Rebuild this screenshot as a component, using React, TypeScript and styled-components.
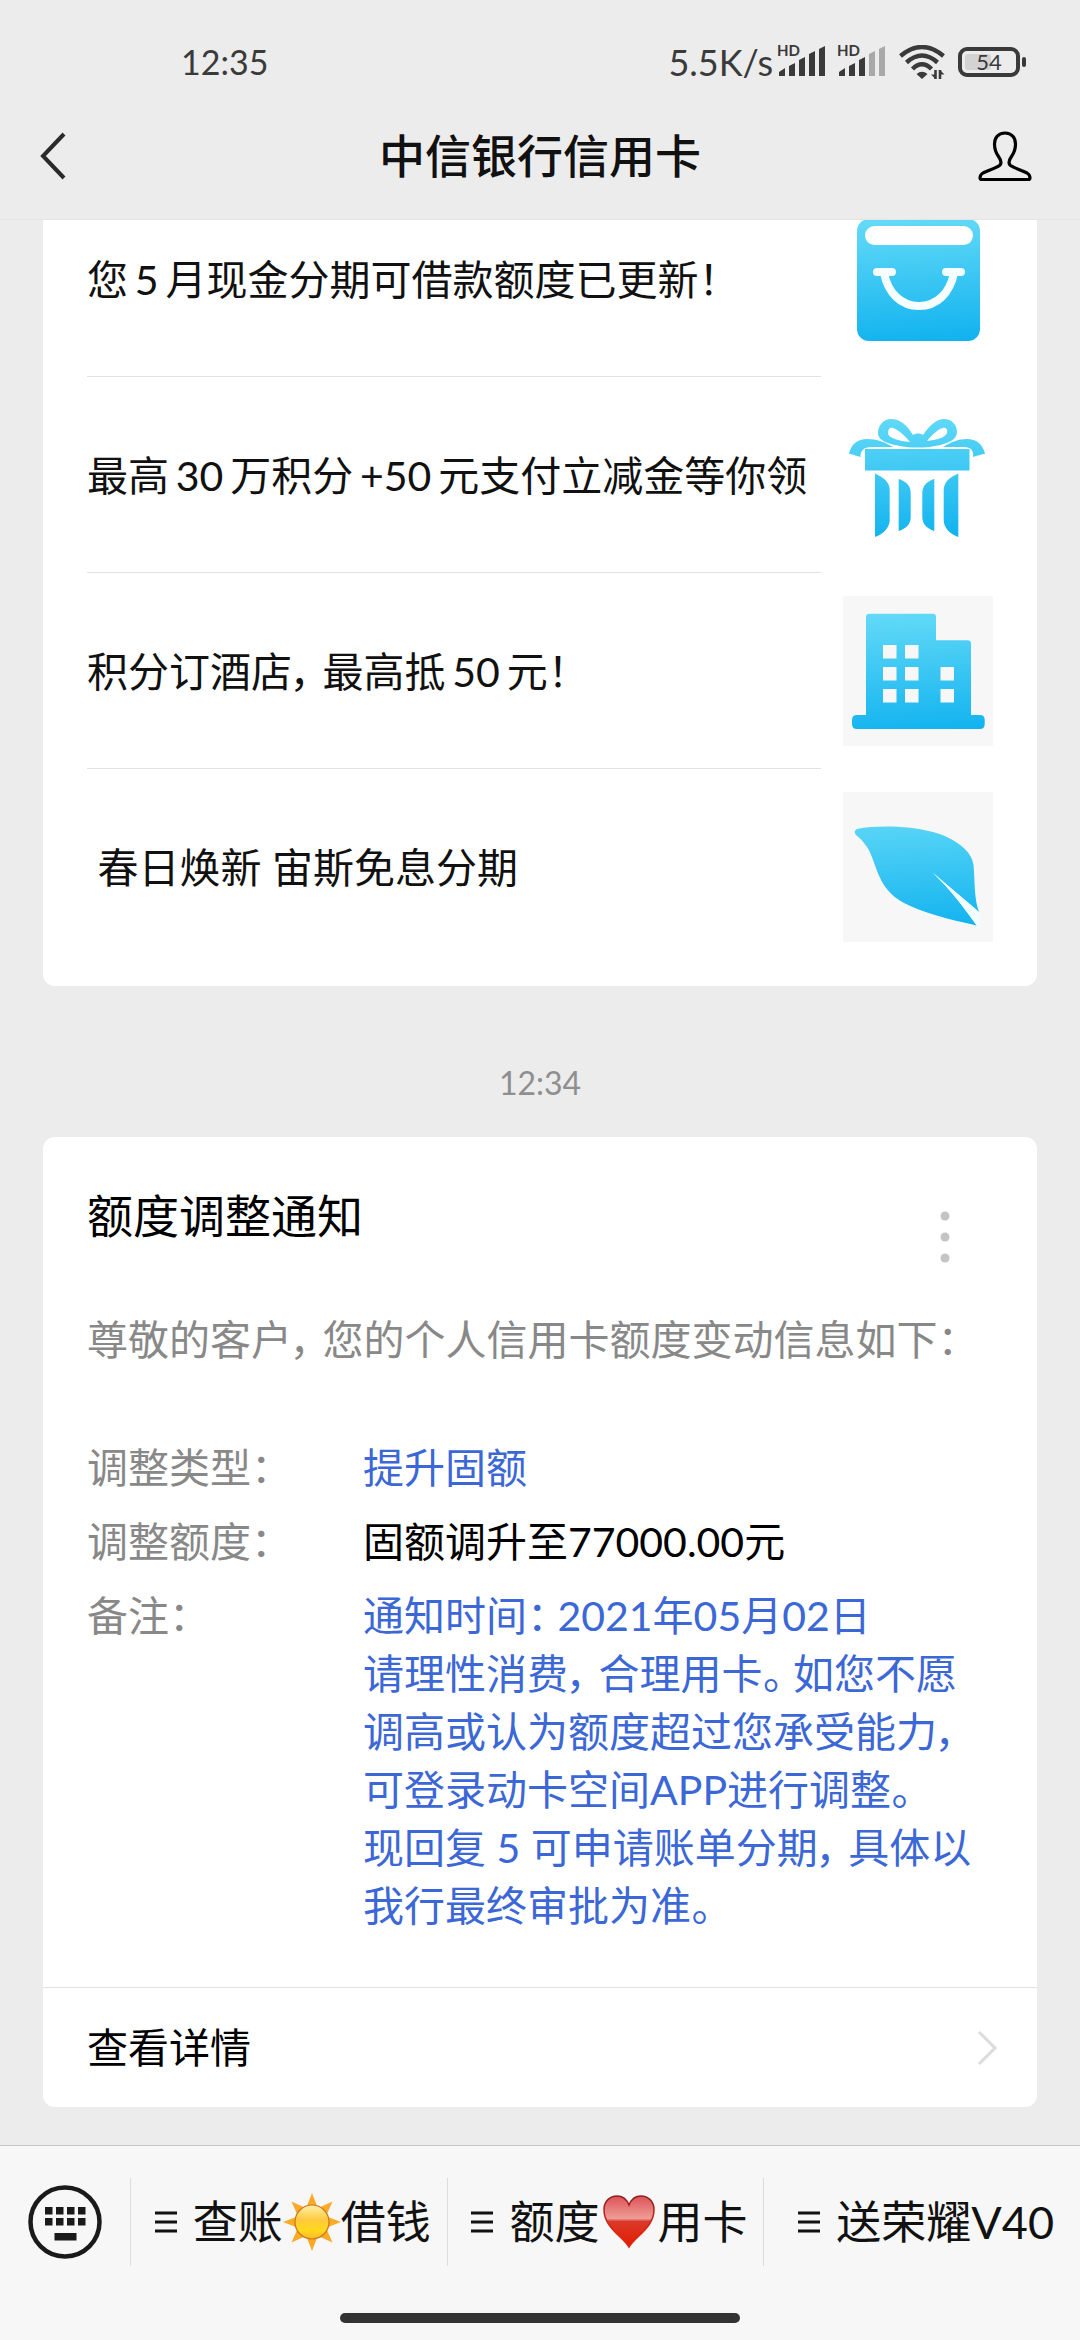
import React from 'react';
import styled, { createGlobalStyle } from 'styled-components';

const GlobalStyle = createGlobalStyle`
  *, *::before, *::after { box-sizing: border-box; }
  body {
    margin: 0;
    background: #ececec;
    font-family: Lato, "Noto Sans CJK SC", sans-serif;
    font-size: 41px;
    line-height: 58px;
    color: #111;
  }
  button {
    font: inherit;
    color: inherit;
    border: 0;
    padding: 0;
    background: none;
    cursor: pointer;
  }
  a { color: inherit; text-decoration: none; }
  svg { display: block; flex: none; }
`;

const Screen = styled.div`
  height: 100vh;
  display: flex;
  flex-direction: column;
`;

const StatusBar = styled.div`
  flex: none;
  display: flex;
  align-items: center;
  justify-content: space-between;
  height: 92px;
  padding: 32px 54px 0 181px;
  font-size: 34px;
  line-height: 40px;
  color: #3a3a3a;
`;

const StatusGroup = styled.div`
  display: flex;
  align-items: center;
`;

const NetworkRate = styled.span`
  margin-right: 4px;
  font-size: 36px;
`;

const SignalIcon = styled.svg`
  margin-right: 10px;
`;

const WifiIcon = styled.svg`
  margin: 0 13px 0 2px;
`;

const NavBar = styled.header`
  flex: none;
  display: grid;
  grid-template-columns: 120px 1fr 120px;
  align-items: center;
  height: 128px;
  border-bottom: 1px solid #e4e4e4;
`;

const NavTitle = styled.h1`
  margin: 0;
  font-size: 46px;
  font-weight: 500;
  text-align: center;
`;

const NavButton = styled.button<{ $end?: boolean }>`
  display: flex;
  align-items: center;
  justify-content: ${(p) => (p.$end ? 'flex-end' : 'flex-start')};
  height: 100%;
  padding: 0 ${(p) => (p.$end ? '48px' : '0')} 0 ${(p) => (p.$end ? '0' : '38px')};
`;

const Thread = styled.main`
  flex: 1;
  min-height: 0;
  overflow: hidden;
  display: flex;
  flex-direction: column;
  justify-content: flex-end;
  padding: 0 43px 38px;
`;

const Card = styled.section`
  flex: none;
  background: #fff;
  border-radius: 12px;
`;

const ArticleList = styled(Card)`
  padding: 0 44px 21px;
`;

const Article = styled.a`
  display: flex;
  align-items: center;
  gap: 22px;
`;

const ArticleTitle = styled.span<{ $last?: boolean }>`
  flex: 1;
  min-width: 0;
  padding: 70px 0 67px;
  white-space: pre;
  font-feature-settings: "palt";
  border-bottom: 1px solid ${(p) => (p.$last ? 'transparent' : '#e2e2e2')};
`;

const Thumb = styled.span<{ $tinted?: boolean }>`
  flex: none;
  width: 150px;
  height: 150px;
  background: ${(p) => (p.$tinted ? '#f7f7f7' : '#fff')};
`;

const Mark = styled.span`
  padding-right: 10px;
`;

const Timestamp = styled.time`
  flex: none;
  padding: 68px 0 25px;
  font-size: 32px;
  text-align: center;
  color: #8f8f8f;
`;

const NoticeBody = styled.div`
  padding: 50px 40px 52px 44px;
`;

const NoticeHead = styled.div`
  display: flex;
  justify-content: space-between;
  align-items: flex-start;
`;

const NoticeTitle = styled.h2`
  margin: 0;
  font-size: 46px;
  font-weight: 400;
  color: #000;
`;

const MoreButton = styled.button`
  width: 104px;
  height: 100px;
  margin-bottom: -42px;
  display: flex;
  align-items: center;
  justify-content: center;
`;

const Greeting = styled.p`
  margin: 66px 0 70px;
  color: #888;
  font-feature-settings: "palt";
`;

const Details = styled.dl`
  display: grid;
  grid-template-columns: 276px 1fr;
  row-gap: 16px;
  margin: 0;
  font-feature-settings: "palt";
`;

const Label = styled.dt`
  color: #888;
`;

const Value = styled.dd<{ $blue?: boolean }>`
  margin: 0;
  white-space: pre-line;
  color: ${(p) => (p.$blue ? '#3c67d6' : '#000')};
`;

const DetailLink = styled.a`
  display: flex;
  align-items: center;
  justify-content: space-between;
  height: 120px;
  padding: 0 38px 0 44px;
  border-top: 1px solid #e2e2e2;
  color: #000;
`;

const Footer = styled.footer`
  flex: none;
  background: #f7f7f7;
  border-top: 1px solid #c6c6c6;
`;

const MenuBar = styled.nav`
  display: flex;
  align-items: center;
  height: 151px;
`;

const KeyboardButton = styled.button`
  flex: none;
  width: 130px;
  display: flex;
  justify-content: center;
`;

const MenuButton = styled.button`
  flex: 1;
  height: 88px;
  padding-left: 8px;
  display: flex;
  align-items: center;
  justify-content: center;
  gap: 16px;
  font-size: 45px;
  white-space: nowrap;
  border-left: 1px solid #dcdcdc;
`;

const MenuLabel = styled.span`
  display: flex;
  align-items: center;
`;

const HomeIndicator = styled.div`
  width: 37%;
  height: 10px;
  margin: 16px auto 17px;
  border-radius: 5px;
  background: #333;
`;

function Signal({ level }: { level: number }) {
  const bars = [
    'M2 30V26L8 22V30Z',
    'M12 30V20L18 17V30Z',
    'M22 30V14L28 11V30Z',
    'M32 30V8L38 5V30Z',
    'M42 30V3L48 0V30Z',
  ];
  return (
    <SignalIcon width="50" height="48" viewBox="0 -8 50 48" aria-label="信号">
      {bars.map((d, i) => (
        <path key={d} d={d} fill={i < level ? '#3a3a3a' : '#a8a8a8'} />
      ))}
      <text x="0" y="10" fontSize="15" fontWeight="700" fill="#3a3a3a">HD</text>
    </SignalIcon>
  );
}

function Wifi() {
  return (
    <WifiIcon width="46" height="35" viewBox="0 0 46 35" fill="none" stroke="#3a3a3a" strokeWidth="4.400" aria-label="无线网络">
      <path d="M1.500 11Q23 -7 44.500 11" />
      <path d="M7.500 17.500Q23 3.500 38.500 17.500" />
      <path d="M13.500 24Q23 14.500 32.500 24" />
      <path d="M17.500 29Q23 24.500 28.500 29L23 34Z" fill="#3a3a3a" stroke="none" />
      <path d="M36.500 25V34M41 34V25" strokeWidth="2.600" />
      <path d="M32 29.500L36.500 34V29.500ZM45.500 29.500L41 25V29.500Z" fill="#3a3a3a" stroke="none" />
    </WifiIcon>
  );
}

function Battery() {
  return (
    <svg width="68" height="30" viewBox="0 0 68 30" aria-label="电量">
      <rect x="2" y="2" width="58" height="26" rx="7" fill="none" stroke="#3a3a3a" strokeWidth="4" />
      <rect x="7" y="7" width="26" height="16" rx="3" fill="#d3d3d3" />
      <rect x="64" y="10" width="4" height="10" rx="2" fill="#3a3a3a" />
      <text x="31" y="23" fontSize="22" textAnchor="middle" fill="#3a3a3a">54</text>
    </svg>
  );
}

function Gradient({ id }: { id: string }) {
  return (
    <defs>
      <linearGradient id={id} gradientUnits="userSpaceOnUse" x1="70" y1="15" x2="78" y2="140">
        <stop offset="0" stopColor="#63daf7" />
        <stop offset="1" stopColor="#10b2ef" />
      </linearGradient>
    </defs>
  );
}

function BagArt() {
  return (
    <svg width="150" height="150" viewBox="0 0 150 150">
      <Gradient id="bag" />
      <rect x="14" y="15" width="123" height="122" rx="12" fill="url(#bag)" />
      <rect x="22" y="22" width="108" height="19" rx="9.500" fill="#fff" />
      <g fill="none" stroke="#f5fdff" strokeWidth="8" strokeLinecap="round">
        <path d="M34 68H49M103 68H118" />
        <path d="M41 69C45 89 58 102 76 102S107 89 111 69" />
      </g>
    </svg>
  );
}

function GiftArt() {
  return (
    <svg width="150" height="150" viewBox="0 0 150 150" fill="url(#gift)">
      <Gradient id="gift" />
      <path d="M22 49H126.500V70.500H22Z" />
      <path d="M32 73.500C40 77 46.700 82 46.700 90V120C46.700 128 40 134 32 137Z" />
      <path d="M55.700 79C62 81 67.700 85 67.700 93V117C67.700 125 62 129 55.700 131Z" />
      <path d="M91.300 79C85 81 79.300 85 79.300 93V117C79.300 125 85 129 91.300 131Z" />
      <path d="M115.300 73.500C107 77 100.700 82 100.700 90V120C100.700 128 107 134 115.300 137Z" />
      <path d="M6 54C8 44 15 39 24 39C34 39 42 42 50 47H28C21 47 17 51 17.500 57C13 56 10 54 6 54Z" />
      <path d="M142 54C140 44 133 39 124 39C115 39 108 42 100 47H121C128 47 131 51 130 57C134 56 138 54 142 54Z" />
      <path fillRule="evenodd" d="M70 35C64 25 57 19 48 19C40 19 35 26 35 33C35 41 46 44 57 46C68 48 82 48 92 46C104 44 114 40 114 32C114 25 109 19 101 19C93 19 86 26 80 35C77 33 73 33 70 35ZM67 42C56 41 45 38 45 33C45 29 47 27 50 28C56 30 62 36 67 42ZM84 41C89 35 95 29 100 28C103 27 105 30 104 33C102 38 93 40 84 41Z" />
    </svg>
  );
}

function BuildingArt() {
  const windows = [[40, 49], [62, 49], [40, 71], [62, 71], [97.5, 71], [40, 93], [62, 93], [97.5, 93]];
  return (
    <svg width="150" height="150" viewBox="0 0 150 150">
      <Gradient id="building" />
      <path
        fill="url(#building)"
        d="M23 119V21Q23 17.700 26.500 17.700H89.500Q93 17.700 93 21V44.300H124.500Q128 44.300 128 48V119H137Q141.700 119 141.700 124V128Q141.700 133 137 133H14Q9 133 9 128V124Q9 119 14 119Z"
      />
      {windows.map(([x, y]) => (
        <rect key={`${x}-${y}`} x={x} y={y} width="13.500" height="13.500" fill="#f7f7f7" />
      ))}
    </svg>
  );
}

function LeafArt() {
  return (
    <svg width="150" height="150" viewBox="0 0 150 150">
      <Gradient id="leaf" />
      <path
        fill="url(#leaf)"
        d="M14 37C35 33 66 34 90 40C112 46 129 59 130.500 73C132 88 131 110 136.700 120.500L89.500 80.500C106 96 120 114 133.700 133.500C105 127 80 121 61 111C33 96 34 70 24 55C20 49 16 45 13 43Q10 39 14 37Z"
      />
      <path fill="#f2fdff" d="M89.500 80.500L136.700 120.500V133L133.700 133.500C120 114 106 96 89.500 80.500Z" />
    </svg>
  );
}

function Sun() {
  const rays = [0, 45, 90, 135, 180, 225, 270, 315];
  return (
    <svg width="58" height="58" viewBox="-29 -29 58 58" role="img" aria-label="☀️">
      <defs>
        <linearGradient id="sun" x1="0" y1="0" x2="0" y2="1">
          <stop offset="0" stopColor="#fff0a8" />
          <stop offset="0.450" stopColor="#ffc93a" />
          <stop offset="0.750" stopColor="#ffd91c" />
          <stop offset="1" stopColor="#ffb62b" />
        </linearGradient>
      </defs>
      {rays.map((angle) => (
        <path key={angle} d="M-5 -16L0 -29L5 -16Z" fill="#fbaa27" transform={`rotate(${angle})`} />
      ))}
      <circle r="17" fill="url(#sun)" stroke="#c8771f" strokeWidth="1.200" />
    </svg>
  );
}

function Heart() {
  return (
    <svg width="58" height="58" viewBox="1 0 58 58" role="img" aria-label="❤️">
      <defs>
        <linearGradient id="heart" x1="0" y1="0" x2="0" y2="1">
          <stop offset="0" stopColor="#de5257" />
          <stop offset="0.440" stopColor="#ee9d96" />
          <stop offset="0.500" stopColor="#db3a2a" />
          <stop offset="1" stopColor="#e31b00" />
        </linearGradient>
        <linearGradient id="heartEdge" x1="0" y1="0" x2="0" y2="1">
          <stop offset="0" stopColor="#8c1f1f" />
          <stop offset="0.700" stopColor="#dd2410" />
        </linearGradient>
      </defs>
      <path
        d="M30 54C24 44 5 34 5 17C5 8 11 3 18 3C24 3 28 7 30 12C32 7 36 3 42 3C49 3 55 8 55 17C55 34 36 44 30 54Z"
        fill="url(#heart)"
        stroke="url(#heartEdge)"
        strokeWidth="1.500"
      />
    </svg>
  );
}

function MenuLines() {
  return (
    <svg width="22" height="22" viewBox="0 0 22 22" stroke="#111" strokeWidth="3">
      <path d="M0 2H22M0 11H22M0 20H22" />
    </svg>
  );
}

/** Leaves a little air after Chinese commas, colons and full stops. */
function Prose({ children }: { children: string }) {
  return (
    <>
      {children.split(/([，：。])/).map((part, i) => (i % 2 ? <Mark key={i}>{part}</Mark> : part))}
    </>
  );
}

const articles = [
  { title: '您\u20065\u2006月现金分期可借款额度已更新！', art: <BagArt /> },
  { title: '最高\u200630\u2006万积分\u2006+50\u2006元支付立减金等你领', art: <GiftArt /> },
  { title: '积分订酒店，最高抵\u200650\u2006元！', art: <BuildingArt />, tinted: true },
  { title: ' 春日焕新 宙斯免息分期', art: <LeafArt />, tinted: true },
];

const remark = [
  '通知时间：2021年05月02日',
  '请理性消费，合理用卡。如您不愿',
  '调高或认为额度超过您承受能力，',
  '可登录动卡空间APP进行调整。',
  '现回复 5 可申请账单分期，具体以',
  '我行最终审批为准。',
].join('\n');

export default function App() {
  return (
    <Screen>
      <GlobalStyle />
      <StatusBar>
        <span>12:35</span>
        <StatusGroup>
          <NetworkRate>5.5K/s</NetworkRate>
          <Signal level={5} />
          <Signal level={3} />
          <Wifi />
          <Battery />
        </StatusGroup>
      </StatusBar>
      <NavBar>
        <NavButton aria-label="返回">
          <svg width="28" height="48" viewBox="0 0 28 48" fill="none" stroke="#2a2a2a" strokeWidth="4">
            <path d="M26 2L5 24L26 46" />
          </svg>
        </NavButton>
        <NavTitle>中信银行信用卡</NavTitle>
        <NavButton $end aria-label="账号主页">
          <svg width="54" height="52" viewBox="0 0 54 52" fill="none" stroke="#000" strokeWidth="3.200" strokeLinejoin="round">
            <path d="M27 3C20 3 16.500 8 16.500 14C16.500 20 18 23 20.500 26.500C23 30 24.500 33 21.500 35.500C18 38 10 40.500 5 43C2.500 44.500 2 46 2 48Q2 49.500 4 49.500H50Q52 49.500 52 48C52 46 51.500 44.500 49 43C44 40.500 36 38 32.500 35.500C29.500 33 31 30 33.500 26.500C36 23 37.500 20 37.500 14C37.500 8 34 3 27 3Z" />
          </svg>
        </NavButton>
      </NavBar>
      <Thread>
        <ArticleList>
          {articles.map((item, i) => (
            <Article href="#" key={item.title}>
              <ArticleTitle $last={i === articles.length - 1}>
                <Prose>{item.title}</Prose>
              </ArticleTitle>
              <Thumb $tinted={item.tinted}>{item.art}</Thumb>
            </Article>
          ))}
        </ArticleList>
        <Timestamp>12:34</Timestamp>
        <Card>
          <NoticeBody>
            <NoticeHead>
              <NoticeTitle>额度调整通知</NoticeTitle>
              <MoreButton aria-label="更多">
                <svg width="10" height="52" viewBox="0 0 10 52" fill="#c4c4c4">
                  <circle cx="5" cy="5" r="4.500" />
                  <circle cx="5" cy="26" r="4.500" />
                  <circle cx="5" cy="47" r="4.500" />
                </svg>
              </MoreButton>
            </NoticeHead>
            <Greeting>
              <Prose>尊敬的客户，您的个人信用卡额度变动信息如下：</Prose>
            </Greeting>
            <Details>
              <Label>调整类型：</Label>
              <Value $blue>提升固额</Value>
              <Label>调整额度：</Label>
              <Value>固额调升至77000.00元</Value>
              <Label>备注：</Label>
              <Value $blue>
                <Prose>{remark}</Prose>
              </Value>
            </Details>
          </NoticeBody>
          <DetailLink href="#">
            查看详情
            <svg width="24" height="36" viewBox="0 0 24 36" fill="none" stroke="#dcdcdc" strokeWidth="3">
              <path d="M4 2L20 18L4 34" />
            </svg>
          </DetailLink>
        </Card>
      </Thread>
      <Footer>
        <MenuBar>
          <KeyboardButton aria-label="切换键盘">
            <svg width="74" height="74" viewBox="0 0 74 74" fill="#1a1a1a">
              <circle cx="37" cy="37" r="34.500" fill="none" stroke="#1a1a1a" strokeWidth="4.500" />
              {[17, 28, 39, 50].map((x) => (
                <React.Fragment key={x}>
                  <rect x={x} y="22" width="7.500" height="7.500" />
                  <rect x={x} y="33" width="7.500" height="7.500" />
                </React.Fragment>
              ))}
              <rect x="26.500" y="48" width="22" height="7.500" />
            </svg>
          </KeyboardButton>
          <MenuButton>
            <MenuLines />
            <MenuLabel>查账<Sun />借钱</MenuLabel>
          </MenuButton>
          <MenuButton>
            <MenuLines />
            <MenuLabel>额度<Heart />用卡</MenuLabel>
          </MenuButton>
          <MenuButton>
            <MenuLines />
            <MenuLabel>送荣耀V40</MenuLabel>
          </MenuButton>
        </MenuBar>
        <HomeIndicator />
      </Footer>
    </Screen>
  );
}
